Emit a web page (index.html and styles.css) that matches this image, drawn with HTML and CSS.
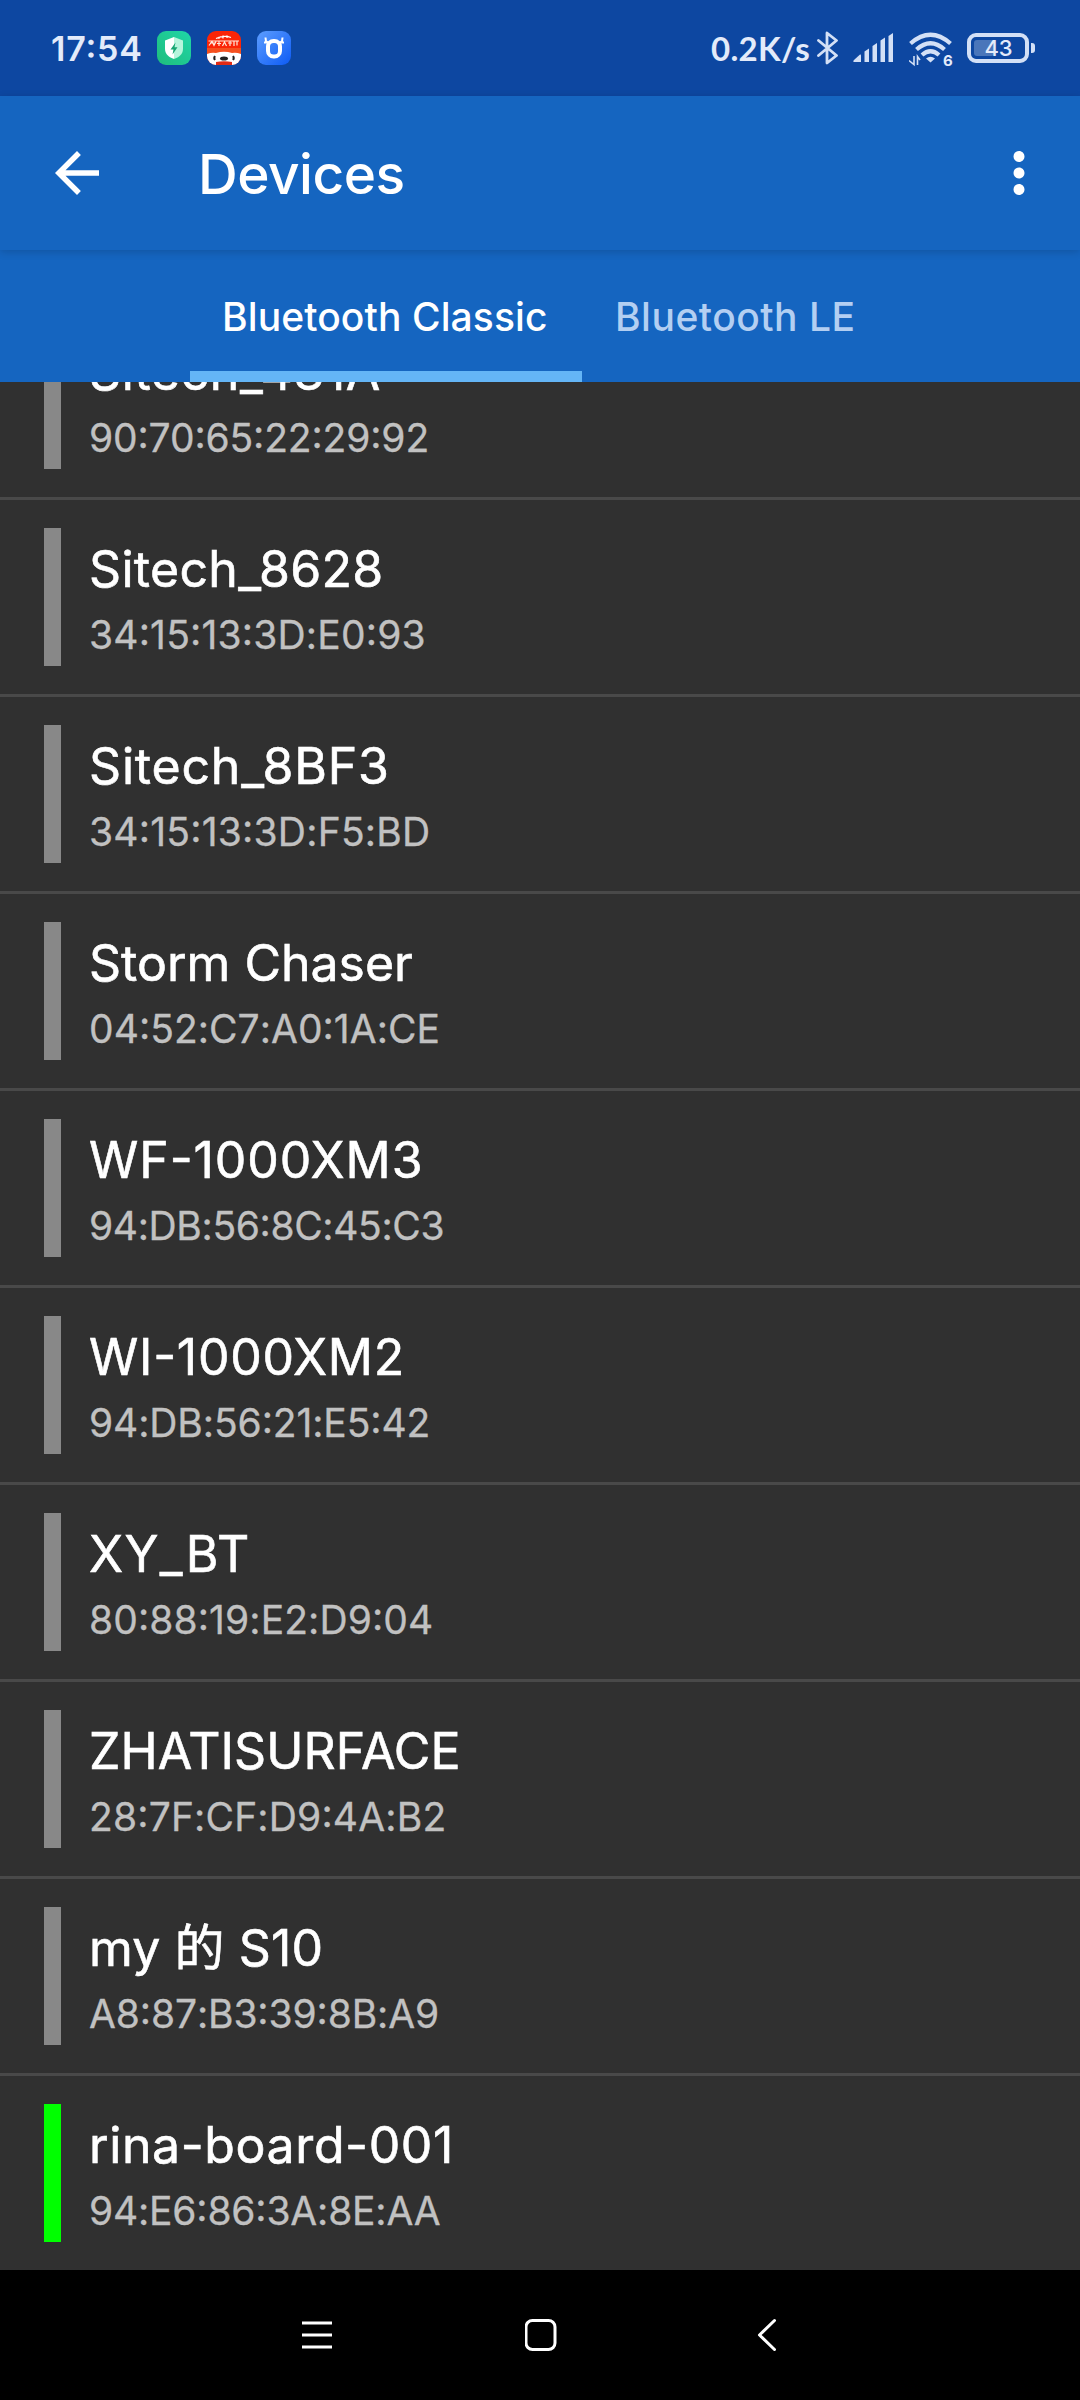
FILE: index.html
```html
<!DOCTYPE html>
<html lang="en">
<head>
<meta charset="utf-8">
<title>Devices</title>
<link rel="stylesheet" href="styles.css">
</head>
<body>
<div class="screen">
  <header class="status">
    <div class="status-left">
      <span class="clock">17:54</span>
      <svg class="app-icon" viewBox="0 0 34 34">
        <defs><linearGradient id="g1" x1="0" y1="1" x2="1" y2="0"><stop offset="0" stop-color="#1fbd7c"/><stop offset="1" stop-color="#1fd6a8"/></linearGradient></defs>
        <rect width="34" height="34" rx="9" fill="url(#g1)"/>
        <path d="M17 6 L26 9.500V18C26 23 22 26.500 17 28Z" fill="#b5f5dc"/>
        <path d="M17 6 L8 9.500V18C8 23 12 26.500 17 28Z" fill="#fff"/>
        <path d="M18.500 11.500L13.500 18.500H16.500L15.500 23.500L20.500 16.300H17.500Z" fill="#17a673"/>
      </svg>
      <svg class="app-icon" viewBox="0 0 34 34">
        <defs><clipPath id="c2"><rect width="34" height="34" rx="9"/></clipPath></defs>
        <g clip-path="url(#c2)">
          <rect width="34" height="34" fill="#fb2507"/>
          <path d="M0 17h34v8H0z" fill="#f5501f"/>
          <path d="M9 7.500q8-3.500 15-1M12 5.800v2M16 4.500v3M20 4.500v2.500" stroke="#fff" stroke-width="1.300" fill="none"/>
          <path d="M1.500 10H32M2 14.500l3-4 2 4 2-4M10 12.500h4M12 10v5M15.500 15l2-4 2 4M21 12h4M23 10v5M27 10v5M30 10v4.500M3 12h5" stroke="#ffe9dc" stroke-width="1.200" fill="none"/>
          <path d="M0 23Q5 21 9 22Q17 19.500 25 22Q29 21 34 23V34H0Z" fill="#fff"/>
          <path d="M8 25q-1.500 2 0 4M26 25q1.500 2 0 4" stroke="#222" stroke-width="2" fill="none"/>
          <ellipse cx="17" cy="27.500" rx="4" ry="2" fill="#222"/>
          <path d="M9 31q8-1.500 16 0v3H9z" fill="#e02a14"/>
        </g>
      </svg>
      <svg class="app-icon" viewBox="0 0 34 34">
        <defs><linearGradient id="g3" x1="0" y1="0" x2="1" y2="1"><stop offset="0" stop-color="#5c9dff"/><stop offset="1" stop-color="#0d5bf5"/></linearGradient></defs>
        <rect width="34" height="34" rx="9" fill="url(#g3)"/>
        <rect x="11" y="10" width="12" height="15.500" rx="5.500" fill="none" stroke="#fff" stroke-width="4"/>
        <path d="M8.500 6.500L9 10.500L12 12M25.500 6.500L25 10.500L22 12M7 11.500H11M27 11.500H23" fill="none" stroke="#fff" stroke-width="2"/>
      </svg>
    </div>
    <div class="status-right">
      <span class="rate">0.2K/s</span>
      <svg class="bt" viewBox="0 0 22 34"><path d="M1.500 9.500L19.500 24.500L10 32V2L19.500 9.500L1.500 24.500" fill="none" stroke="#d3e0f6" stroke-width="2.800" stroke-linejoin="round" stroke-linecap="round"/></svg>
      <svg class="signal" viewBox="0 0 40 30" fill="#d3e0f6">
        <path d="M1 29Q-0.500 28.500 1 27L7 21.500Q8 21 8 22.500V29Z"/>
        <path d="M11.500 18.500L16 15.500V29H11.500Z"/><path d="M19.500 13L24 10V29H19.500Z"/><path d="M27.500 7.500L32 4.500V29H27.500Z"/><path d="M35.500 3L40 0V29H35.500Z"/>
      </svg>
      <svg class="wifi" viewBox="0 0 44 36">
        <g fill="none" stroke="#d3e0f6" stroke-width="4.200"><path d="M1.500 11.500Q21.500 -6 41.500 11.500"/><path d="M7.500 17.500Q21.500 5 35.500 17.500"/><path d="M13 23Q21.500 15.500 30 23"/></g>
        <path d="M17 26.500Q21.500 23 26 26.500L21.500 30.500Z" fill="#d3e0f6"/>
        <path d="M0 28.500L5 32.500V24M8.500 33V24.500L11 28" fill="none" stroke="#d3e0f6" stroke-width="1.600"/>
        <text x="34" y="33.500" class="wifi-gen">6</text>
      </svg>
      <div class="battery"><span class="battery-level"></span><span class="battery-text">43</span></div>
    </div>
  </header>

  <div class="appbar">
    <svg class="icon" viewBox="0 0 24 24"><path d="M20 11H7.830l5.590-5.590L12 4l-8 8 8 8 1.410-1.410L7.830 13H20v-2z" fill="#fff"/></svg>
    <h1 class="title">Devices</h1>
    <svg class="icon" viewBox="0 0 24 24"><path d="M12 8c1.100 0 2-.9 2-2s-.9-2-2-2-2 .9-2 2 .9 2 2 2zm0 2c-1.100 0-2 .9-2 2s.9 2 2 2 2-.9 2-2-.9-2-2-2zm0 6c-1.100 0-2 .9-2 2s.9 2 2 2 2-.9 2-2-.9-2-2-2z" fill="#fff"/></svg>
  </div>

  <nav class="tabs">
    <div class="tab active">Bluetooth Classic</div>
    <div class="tab">Bluetooth LE</div>
  </nav>

  <main class="list">
    <div class="row r1"><span class="bar"></span><div class="info"><div class="name">Sitech_431A</div><div class="addr">90:70:65:22:29:92</div></div></div>
    <div class="row r2"><span class="bar"></span><div class="info"><div class="name">Sitech_8628</div><div class="addr">34:15:13:3D<i>:</i>E0:93</div></div></div>
    <div class="row r3"><span class="bar"></span><div class="info"><div class="name">Sitech_8BF3</div><div class="addr">34:15:13:3D<i>:</i>F5<i>:</i>BD</div></div></div>
    <div class="row r4"><span class="bar"></span><div class="info"><div class="name">Storm Chaser</div><div class="addr">04:52<i>:</i>C7<i>:</i>A0:1A<i>:</i>CE</div></div></div>
    <div class="row r5"><span class="bar"></span><div class="info"><div class="name">WF-1000XM3</div><div class="addr">94<i>:</i>DB<i>:</i>56:8C<i>:</i>45<i>:</i>C3</div></div></div>
    <div class="row r6"><span class="bar"></span><div class="info"><div class="name">WI-1000XM2</div><div class="addr">94<i>:</i>DB<i>:</i>56:21<i>:</i>E5:42</div></div></div>
    <div class="row r7"><span class="bar"></span><div class="info"><div class="name">XY_BT</div><div class="addr">80:88:19<i>:</i>E2<i>:</i>D9:04</div></div></div>
    <div class="row r8"><span class="bar"></span><div class="info"><div class="name">ZHATISURFACE</div><div class="addr">28:7F<i>:</i>CF<i>:</i>D9:4A<i>:</i>B2</div></div></div>
    <div class="row r9"><span class="bar"></span><div class="info"><div class="name">my 的 S10</div><div class="addr">A8:87<i>:</i>B3:39:8B<i>:</i>A9</div></div></div>
    <div class="row r10"><span class="bar online"></span><div class="info"><div class="name">rina-board-001</div><div class="addr">94<i>:</i>E6:86:3A<i>:</i>8E<i>:</i>AA</div></div></div>
  </main>

  <footer class="navbar">
    <svg viewBox="0 0 34 34"><path d="M2 5H32M2 17H32M2 29H32" stroke="#fff" stroke-width="3"/></svg>
    <svg viewBox="0 0 34 34"><rect x="0.500" y="2.500" width="29" height="29" rx="6.500" fill="none" stroke="#fff" stroke-width="3" transform="translate(0.500 0)"/></svg>
    <svg viewBox="0 0 34 34"><path d="M24.500 2.500L9.500 17L24.500 31.500" fill="none" stroke="#fff" stroke-width="3" stroke-linecap="round" stroke-linejoin="round"/></svg>
  </footer>
</div>
</body>
</html>
```
FILE: styles.css
```css
* { box-sizing: border-box; margin: 0; padding: 0; }
body { background: #303030; font-family: "Inter", "Noto Sans CJK SC", sans-serif; color: #fff; }
svg { display: block; flex: none; }
.screen { width: 1080px; height: 2400px; display: flex; flex-direction: column; overflow: hidden; }

.status { height: 96px; flex: none; background: #0d47a1; display: flex; justify-content: space-between; padding-left: 51px; padding-right: 51px; }
.status-left, .status-right { display: flex; align-items: center; }
.clock { width: 106px; font-size: 34px; font-weight: 600; letter-spacing: 0.8px; color: #e3ebfa; line-height: 40px; padding-top: 2px; font-feature-settings: "calt" 1; }
.app-icon { width: 34px; height: 34px; margin-right: 16px; }
.rate { width: 106px; font: 700 33px/40px "Lato", sans-serif; letter-spacing: 0.3px; color: #e3ebfa; }
.bt { width: 22px; height: 34px; margin-right: 14px; }
.signal { width: 40px; height: 30px; margin-right: 16px; }
.wifi { width: 44px; height: 36px; margin-right: 14px; margin-top: 4px; }
.wifi-gen { font: 700 15px "Inter", sans-serif; fill: #e3ebfa; }
.battery { position: relative; width: 62px; height: 30px; border: 4px solid #d3e0f6; border-radius: 9px; display: flex; align-items: center; justify-content: center; }
.battery::after { content: ""; position: absolute; left: 60px; top: 6px; width: 4px; height: 10px; border-radius: 0 3px 3px 0; background: #d3e0f6; }
.battery-level { position: absolute; left: 3px; top: 3px; width: 20px; height: 16px; border-radius: 3px; background: #4a76ba; }
.battery-text { position: relative; font-size: 22px; font-weight: 500; line-height: 22px; color: #e3ebfa; padding-left: 1px; }

.appbar { height: 154px; flex: none; background: #1565c0; display: flex; align-items: center; padding: 0 28px 0 44px; position: relative; box-shadow: 0 2px 8px rgba(0, 0, 0, 0.16); z-index: 1; }
.icon { width: 66px; height: 66px; }
.title { flex: 1; margin-left: 88px; font: 500 55px/70px "Inter", sans-serif; letter-spacing: -0.5px; padding-top: 2px; }

.tabs { height: 132px; flex: none; background: #1565c0; display: grid; grid-template-columns: 392px 308px; padding-left: 190px; }
.tab { font-size: 39px; font-weight: 500; line-height: 52px; letter-spacing: 0.5px; padding: 41px 0 0 33px; color: #b3cff2; white-space: nowrap; }
.tab.active { color: #fff; border-bottom: 11px solid #64b5f6; padding-left: 32px; letter-spacing: 0.1px; }

.list { height: 1888px; flex: none; overflow: hidden; background: #303030; }
.row { height: 197px; display: flex; padding: 28px 0 0 44px; border-bottom: 3px solid #494949; }
.row:first-child { margin-top: -79px; }
.row:last-child { border-bottom: 0; height: 194px; }
.bar { width: 17px; height: 138px; background: #888; margin-right: 28px; }
.bar.online { background: #0f0; }
.info { padding-top: 11px; white-space: nowrap; font-feature-settings: "calt" 1; }
.name { height: 60px; font-size: 50px; line-height: 60px; letter-spacing: 0.6px; -webkit-text-stroke: 0.6px #fff; }
.addr { height: 50px; margin-top: 11px; font-size: 39px; line-height: 50px; color: #c1c1c1; -webkit-text-stroke: 0.3px #c1c1c1; }
.addr i { font-style: normal; font-feature-settings: "calt" 0; }

.r2 .name { letter-spacing: 0.3px; }
.r3 .name { letter-spacing: 0.8px; }
.r4 .name { letter-spacing: 0; }
.r5 .name { letter-spacing: 0.93px; }
.r6 .name { letter-spacing: 0.72px; }
.r7 .name { letter-spacing: 1.4px; }
.r8 .name { letter-spacing: 0.1px; }
.r9 .name { letter-spacing: 0.11px; }
.r1 .addr { letter-spacing: -0.14px; }
.r2 .addr { letter-spacing: 0.19px; }
.r3 .addr { letter-spacing: 0.22px; }
.r4 .addr { letter-spacing: 0.04px; }
.r5 .addr { letter-spacing: -0.36px; }
.r6 .addr { letter-spacing: -0.1px; }
.r7 .addr { letter-spacing: 0.1px; }
.r8 .addr { letter-spacing: 0.17px; }
.r9 .addr { letter-spacing: -0.12px; }
.r10 .addr { letter-spacing: -0.18px; }

.navbar { height: 130px; flex: none; background: #000; display: flex; justify-content: space-between; align-items: center; padding: 0 296px 0 300px; }
.navbar svg { width: 34px; height: 34px; }
```
